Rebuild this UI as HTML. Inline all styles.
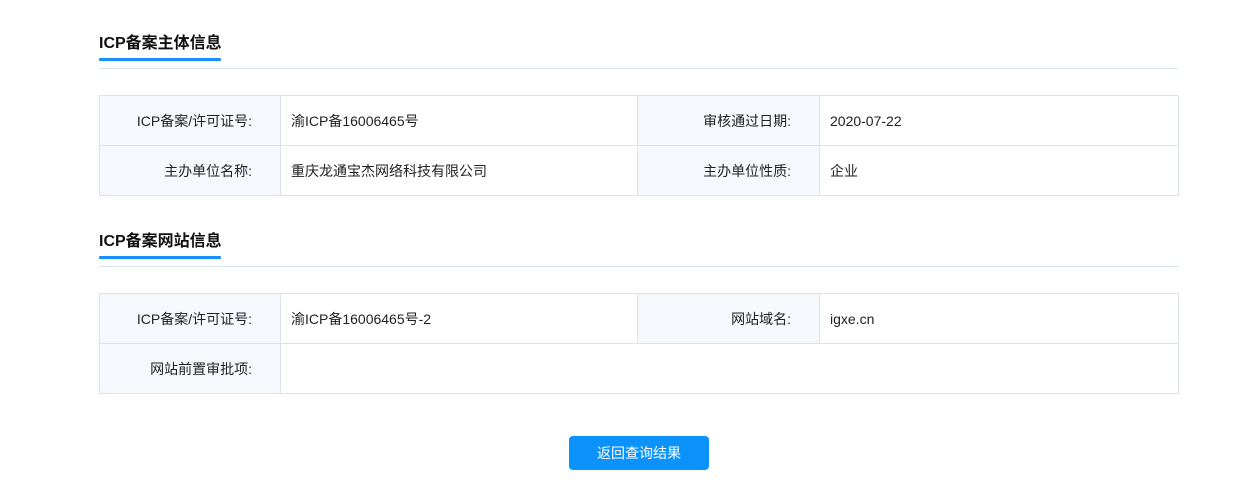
<!DOCTYPE html>
<html><head><meta charset="utf-8"><style>
body{margin:0;background:#fff;font-family:"Liberation Sans","Noto Sans CJK SC",sans-serif;color:#222;width:1234px;height:495px;position:relative;overflow:hidden}
.h{position:absolute;left:99px;font-size:16px;font-weight:bold;color:#111;line-height:20px}
.ul{position:absolute;left:99px;width:122px;height:3px;background:#1890ff;border-radius:1px}
.ln{position:absolute;left:99px;width:1080px;height:1px;background:#dbe6f1}
.c{position:absolute;box-sizing:border-box;border:1px solid #dde3ea;font-size:14px;line-height:50px;height:51px}
.l{background:#f5f9fd;text-align:right;padding-right:28px}
.v{background:#fff;padding-left:10px}
.btn{position:absolute;left:569px;top:436px;width:140px;height:34px;background:#0b92fb;border-radius:4px;color:#fff;font-size:14px;text-align:center;line-height:34px}
</style></head><body>
<div class="h" style="top:34px">ICP备案主体信息</div>
<div class="ul" style="top:58px"></div>
<div class="ln" style="top:68px"></div>
<div class="c l" style="left:99px;top:95px;width:182px">ICP备案/许可证号:</div>
<div class="c v" style="left:280px;top:95px;width:358px">渝ICP备16006465号</div>
<div class="c l" style="left:637px;top:95px;width:183px">审核通过日期:</div>
<div class="c v" style="left:819px;top:95px;width:360px">2020-07-22</div>
<div class="c l" style="left:99px;top:145px;width:182px">主办单位名称:</div>
<div class="c v" style="left:280px;top:145px;width:358px">重庆龙通宝杰网络科技有限公司</div>
<div class="c l" style="left:637px;top:145px;width:183px">主办单位性质:</div>
<div class="c v" style="left:819px;top:145px;width:360px">企业</div>

<div class="h" style="top:232px">ICP备案网站信息</div>
<div class="ul" style="top:256px"></div>
<div class="ln" style="top:266px"></div>
<div class="c l" style="left:99px;top:293px;width:182px">ICP备案/许可证号:</div>
<div class="c v" style="left:280px;top:293px;width:358px;border-bottom-color:#c9d9e8">渝ICP备16006465号-2</div>
<div class="c l" style="left:637px;top:293px;width:183px">网站域名:</div>
<div class="c v" style="left:819px;top:293px;width:360px">igxe.cn</div>
<div class="c l" style="left:99px;top:343px;width:182px">网站前置审批项:</div>
<div class="c v" style="left:280px;top:343px;width:899px"></div>
<div class="btn">返回查询结果</div>
</body></html>
